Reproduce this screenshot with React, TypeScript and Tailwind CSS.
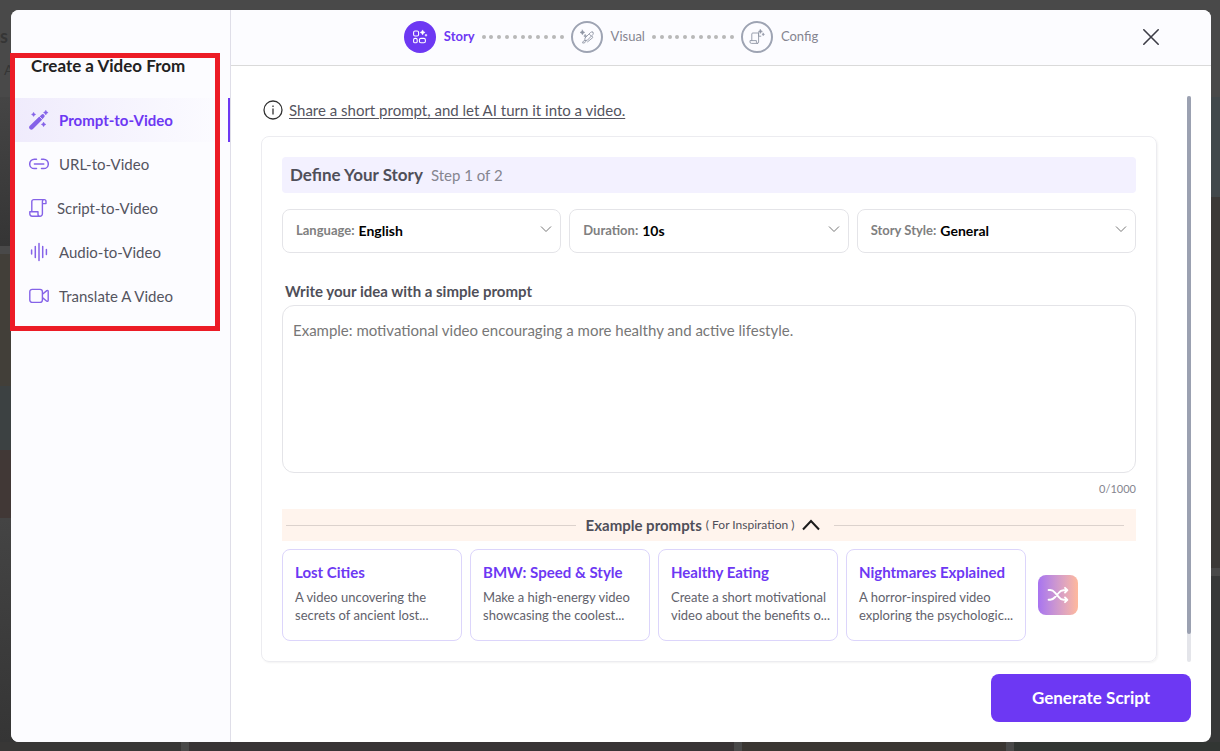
import React, { useState } from 'react';

/* ---------- Icons ---------- */

const Sparkle = ({ x, y, r }: { x: number; y: number; r: number }) => (
    <path
        d={`M${x} ${y - r}L${x + r * 0.35} ${y - r * 0.35}L${x + r} ${y}L${x + r * 0.35} ${y + r * 0.35}L${x} ${y + r}L${x - r * 0.35} ${y + r * 0.35}L${x - r} ${y}L${x - r * 0.35} ${y - r * 0.35}Z`}
        fill="currentColor"
        stroke="currentColor"
        strokeWidth="0.5"
        strokeLinejoin="round"
    />
);

const WandIcon = () => (
    <svg width="20" height="20" viewBox="0 0 20 20" fill="none" aria-hidden="true">
        <path d="M2.4 17.4L10.6 9.2" stroke="currentColor" strokeWidth="4.4" strokeLinecap="round" />
        <path d="M12.2 7.6L13.8 6" stroke="currentColor" strokeWidth="3.8" strokeLinecap="round" />
        <path d="M10.4 6.4L13.4 9.4" stroke="#f3effd" strokeWidth="0.8" />
        <Sparkle x={4.6} y={4.4} r={2.1} />
        <Sparkle x={16.8} y={2.6} r={2.3} />
        <Sparkle x={14.6} y={14.4} r={2.3} />
    </svg>
);

const LinkIcon = () => (
    <svg width="20" height="12" viewBox="0 0 20 12" fill="none" stroke="currentColor" strokeWidth="1.5" strokeLinecap="round" aria-hidden="true">
        <path d="M7.5 1.2H5.4a4.7 4.7 0 0 0 0 9.4h2.1M12.5 1.2h2.1a4.7 4.7 0 0 1 0 9.4h-2.1M5.4 5.9h9.4" />
    </svg>
);

const ScrollIcon = () => (
    <svg width="18" height="20" viewBox="0 0 18 20" fill="none" stroke="currentColor" strokeWidth="1.4" strokeLinejoin="round" strokeLinecap="round" aria-hidden="true">
        <path d="M2.8 13.6V3.6a2 2 0 0 1 2-2h10.4a1.8 1.8 0 0 1 1.8 1.8v2.2h-3.6V3.4a1.8 1.8 0 0 1 1.8-1.8M13.4 5.6v10.2a2.4 2.4 0 0 1-2.4 2.4M11 18.2a2 2 0 0 1-2-2v-2.4H0.8v2a2.4 2.4 0 0 0 2.4 2.4H11" />
    </svg>
);

const AudioIcon = () => (
    <svg width="20" height="20" viewBox="0 0 20 20" fill="none" stroke="currentColor" strokeWidth="1.5" strokeLinecap="round" aria-hidden="true">
        <path d="M2.6 8v4M6.3 4.6v10.8M10 1.6v16.8M13.7 4.6v10.8M17.4 7.6v4.8" />
    </svg>
);

const VideoIcon = () => (
    <svg width="20" height="16" viewBox="0 0 20 16" fill="none" stroke="currentColor" strokeWidth="1.4" strokeLinejoin="round" aria-hidden="true">
        <rect x="0.8" y="1.4" width="12.6" height="13" rx="2.4" />
        <path d="M13.4 6.2L17.8 2.6q1.4-.6 1.4.9v8.8q0 1.5-1.4.9L13.4 9.6" />
    </svg>
);

const StoryIcon = () => (
    <svg width="16" height="16" viewBox="0 0 16 16" fill="none" stroke="currentColor" strokeWidth="1.1" aria-hidden="true">
        <rect x="1.6" y="2" width="5" height="5" rx="1.4" />
        <rect x="1.6" y="9.4" width="3.6" height="4.4" rx="1.4" />
        <rect x="7.4" y="9.4" width="6" height="4.4" rx="1.5" />
        <Sparkle x={10.6} y={3.4} r={2.5} />
        <Sparkle x={14} y={6.2} r={1.2} />
    </svg>
);

const VisualIcon = () => (
    <svg width="16" height="16" viewBox="0 0 16 16" fill="none" stroke="currentColor" strokeWidth="0.9" strokeLinejoin="round" strokeLinecap="round" aria-hidden="true">
        <path d="M13.8 3.2c.8.6.6 1.6 0 2.4L8.4 11.2 5.8 11.6 6 9l5.4-5.4c.8-.7 1.7-1 2.4-.4ZM10.4 5.2l1.8 1.8M5.8 11.6c-1.2 0-2 .8-2.2 2.4 1.8.2 3-.2 3.4-2.4M13.2 7.4l.6 1.2L8.6 12.8" />
        <Sparkle x={3.4} y={3.4} r={2.4} />
        <Sparkle x={6.2} y={7} r={1.5} />
    </svg>
);

const ConfigIcon = () => (
    <svg width="16" height="16" viewBox="0 0 16 16" fill="none" stroke="currentColor" strokeWidth="0.9" strokeLinejoin="round" strokeLinecap="round" aria-hidden="true">
        <path d="M9.4 4H3.8a1 1 0 0 0-1 1v6.6M9.6 4v9.2a1.2 1.2 0 0 1-1.2 1.2M8.4 14.4a1 1 0 0 1-1-1v-1.8H1v1.4a1.4 1.4 0 0 0 1.4 1.4h6M9.6 4v3.2h2.2" />
        <Sparkle x={11.4} y={2.4} r={2} />
        <Sparkle x={14.2} y={5.4} r={1.3} />
    </svg>
);

const ShuffleIcon = () => (
    <svg width="22" height="18" viewBox="0 0 22 18" fill="none" stroke="currentColor" strokeWidth="1.9" strokeLinecap="round" strokeLinejoin="round" aria-hidden="true">
        <path d="M1.6 4h1.6c2.2 0 3.4 1 5 2.8l3.4 4c1.4 1.8 2.8 3 5 3h3.2M1.6 13.8h1.6c2.2 0 3.4-1 5-2.8l3.4-4c1.4-1.8 2.8-2.8 5-2.8h3.2M18 1.8L20.4 4.2 18 6.6M18 11.4l2.4 2.4-2.4 2.4" />
    </svg>
);

/* ---------- Data ---------- */

const SOURCES = [
    { label: 'Prompt-to-Video', Icon: WandIcon },
    { label: 'URL-to-Video', Icon: LinkIcon },
    { label: 'Script-to-Video', Icon: ScrollIcon },
    { label: 'Audio-to-Video', Icon: AudioIcon },
    { label: 'Translate A Video', Icon: VideoIcon },
];

const STEPS = [
    { label: 'Story', Icon: StoryIcon },
    { label: 'Visual', Icon: VisualIcon },
    { label: 'Config', Icon: ConfigIcon },
];

const OPTIONS = [
    { id: 'language', label: 'Language:', values: ['English', 'Spanish', 'French'] },
    { id: 'duration', label: 'Duration:', values: ['10s', '30s', '60s'] },
    { id: 'style', label: 'Story Style:', values: ['General', 'Dramatic', 'Funny'] },
];

const EXAMPLES = [
    { title: 'Lost Cities', lines: ['A video uncovering the', 'secrets of ancient lost...'] },
    { title: 'BMW: Speed & Style', lines: ['Make a high-energy video', 'showcasing the coolest...'] },
    { title: 'Healthy Eating', lines: ['Create a short motivational', 'video about the benefits o...'] },
    { title: 'Nightmares Explained', lines: ['A horror-inspired video', 'exploring the psychologic...'] },
];

/* ---------- Sections ---------- */

// Dimmed gallery behind the dialog, only its edges show
function Backdrop() {
    return (
        <div className="absolute inset-0 flex flex-col overflow-hidden bg-[#494949]" aria-hidden="true">
            <div className="h-[97px] shrink-0 text-[#353535]">
                <div className="pt-6 text-lg leading-6 font-bold">s</div>
                <div className="pl-1 pt-3 text-sm leading-5">A</div>
            </div>
            <div className="flex flex-1">
                <div className="flex w-1/2 flex-col gap-2">
                    <div className="h-[149px] bg-linear-to-b from-[#454545] to-[#353535]" />
                    <div className="flex flex-1 flex-col">
                        <div className="h-[132px] bg-[#423f39]" />
                        <div className="h-[64px] bg-[#3c4142]" />
                        <div className="h-[68px] bg-[#413836]" />
                        <div className="flex-1 bg-linear-to-b from-[#444444] to-[#353535]" />
                    </div>
                </div>
                <div className="flex w-1/2 flex-col gap-2">
                    <div className="flex h-[471px] flex-col">
                        <div className="h-[100px] bg-[#41484b]" />
                        <div className="flex-1 bg-[#3b3937]" />
                    </div>
                    <div className="flex-1 bg-[#373838]" />
                </div>
            </div>
            <div className="flex h-[9px] shrink-0 gap-2">
                <div className="w-[181px] bg-[#383736]" />
                <div className="flex-1 bg-[#383435]" />
                <div className="w-[264px] bg-[#3a3632]" />
                <div className="w-[206px] bg-[#323633]" />
            </div>
        </div>
    );
}

function Sidebar() {
    return (
        <aside className="w-[220px] shrink-0 border-r border-[#dfdee8] bg-[#fcfcff] pt-11">
            <h2 className="pl-5 text-[17px] leading-6 font-bold text-[#222222]">Create a Video From</h2>
            <nav className="mt-5 flex flex-col">
                {SOURCES.map(({ label, Icon }, i) => (
                    <button
                        key={label}
                        className={
                            i === 0
                                ? 'flex h-11 items-center gap-[10px] border-r-2 border-[#6d38f3] bg-linear-to-r from-[#efebfc] to-[#fcfcff] pl-[18px] text-[15px] font-bold text-[#6d38f3]'
                                : 'flex h-11 items-center gap-[10px] pl-[18px] text-[15px] text-[#55555f]'
                        }
                    >
                        <span className="text-[#8563e8]"><Icon /></span>
                        {label}
                    </button>
                ))}
            </nav>
        </aside>
    );
}

function Header() {
    return (
        <header className="flex h-14 shrink-0 items-center border-b border-[#dadada] bg-[#fcfcff] pr-10 pb-px">
            <ol className="flex flex-1 items-center justify-center gap-[7px] pr-[140px] text-[13px]">
                {STEPS.map(({ label, Icon }, i) => (
                    <React.Fragment key={label}>
                        {i > 0 && (
                            <li className="flex w-[82px] justify-between" aria-hidden="true">
                                {Array.from({ length: 11 }, (_, d) => (
                                    <span key={d} className="size-1 rounded-full bg-[#b8b8b8]" />
                                ))}
                            </li>
                        )}
                        <li className="flex items-center gap-2">
                            <span
                                className={
                                    i === 0
                                        ? 'flex size-8 items-center justify-center rounded-full bg-[#6d38f3] text-white'
                                        : 'flex size-8 items-center justify-center rounded-full border-2 border-[#9ea4b3] text-[#9096a5]'
                                }
                            >
                                <Icon />
                            </span>
                            <span className={i === 0 ? 'font-bold text-[#6d38f3]' : 'text-[#858590]'}>{label}</span>
                        </li>
                    </React.Fragment>
                ))}
            </ol>
            <button className="flex size-10 items-center justify-center text-[#3c3c46]" aria-label="Close">
                <svg width="18" height="18" viewBox="0 0 18 18" stroke="currentColor" strokeWidth="1.6" strokeLinecap="round">
                    <path d="M1.8 1.8L16.2 16.2M16.2 1.8L1.8 16.2" />
                </svg>
            </button>
        </header>
    );
}

function OptionSelect({ id, label, values }: { id: string; label: string; values: string[] }) {
    return (
        <div className="flex h-11 flex-1 items-center gap-1 rounded-lg border border-[#e4e4e8] pr-2 pb-px pl-[13px]">
            <label htmlFor={id} className="text-[13px] font-bold text-[#808080]">{label}</label>
            <select id={id} className="min-w-0 flex-1 appearance-none bg-transparent text-sm font-bold text-black">
                {values.map((v) => <option key={v}>{v}</option>)}
            </select>
            <svg className="mb-1" width="12" height="8" viewBox="0 0 12 8" fill="none" stroke="#777" aria-hidden="true">
                <path d="M1 1.5L6 6.5L11 1.5" />
            </svg>
        </div>
    );
}

function StoryCard() {
    const [prompt, setPrompt] = useState('');

    return (
        <section className="mt-3 rounded-lg border border-[#ececf0] p-5 shadow-[1px_1px_2px_rgba(0,0,0,0.05)]">
            <div className="flex h-9 items-center gap-2 rounded bg-[#f3f1ff] pl-2">
                <h3 className="text-[17px] font-bold text-[#4f4f59]">Define Your Story</h3>
                <span className="text-[15px] text-[#85858f]">Step 1 of 2</span>
            </div>

            <div className="mt-4 flex gap-2">
                {OPTIONS.map((o) => <OptionSelect key={o.id} {...o} />)}
            </div>

            <label htmlFor="idea" className="mt-7 block pl-[3px] text-[15px] leading-5 font-bold text-[#4f4f59]">
                Write your idea with a simple prompt
            </label>
            <textarea
                id="idea"
                value={prompt}
                maxLength={1000}
                onChange={(e) => setPrompt(e.target.value)}
                placeholder="Example: motivational video encouraging a more healthy and active lifestyle."
                className="mt-1 block h-[168px] w-full resize-none rounded-xl border border-[#e4e4e8] px-[10px] py-[14px] text-[15px] leading-5 text-[#33333d] placeholder:text-[#777777]"
            />
            <p className="mt-2 text-right text-[11px] leading-4 text-[#85858f]">{prompt.length}/1000</p>

            <div className="mt-3 flex h-8 items-center bg-[#fff4ed] pr-3 pl-1">
                <span className="h-px flex-1 bg-[#dcd2cd]" />
                <button className="mx-[10px] flex items-center gap-1 text-[#4f4f59]">
                    <span className="text-[15px] font-bold">Example prompts</span>
                    <span className="text-xs">( For Inspiration )</span>
                    <svg className="mx-1" width="18" height="12" viewBox="0 0 18 12" fill="none" stroke="#1c1c1c" strokeWidth="2" aria-hidden="true">
                        <path d="M1 10.5L9 2L17 10.5" />
                    </svg>
                </button>
                <span className="h-px flex-1 bg-[#dcd2cd]" />
            </div>

            <div className="mt-2 flex items-center gap-2">
                {EXAMPLES.map(({ title, lines }) => (
                    <button key={title} className="h-[92px] w-[180px] rounded-lg border border-[#dcd5fb] px-3 pb-1 text-left">
                        <span className="block text-[15px] leading-5 font-bold text-[#6d38f3]">{title}</span>
                        <span className="mt-[6px] block text-[13px] leading-[18px] whitespace-nowrap text-[#62626c]">
                            {lines[0]}<br />{lines[1]}
                        </span>
                    </button>
                ))}
                <button
                    className="ml-1 flex size-10 items-center justify-center rounded-lg bg-linear-to-r from-[#a873f0] to-[#ffb99c] text-white"
                    aria-label="Shuffle examples"
                >
                    <ShuffleIcon />
                </button>
            </div>
        </section>
    );
}

export default function App() {
    return (
        <div className="relative flex min-h-screen pt-[10px] pr-[9px] pb-[9px] pl-[11px] font-['Lato','Open_Sans',sans-serif]">
            <Backdrop />

            <div className="relative flex flex-1 overflow-hidden rounded-lg bg-white" role="dialog" aria-label="Create a video">
                <Sidebar />
                <div className="flex min-w-0 flex-1 flex-col">
                    <Header />
                    <div className="flex flex-1 flex-col pt-[30px] pr-5 pb-5 pl-[30px]">
                        <div className="flex gap-[30px]">
                            <div className="min-w-0 flex-1">
                                <div className="flex h-7 items-center gap-[6px] pl-[2px]">
                                    <svg width="20" height="20" viewBox="0 0 20 20" fill="none" stroke="#333" strokeWidth="1.3" aria-hidden="true">
                                        <circle cx="10" cy="10" r="9" />
                                        <path d="M10 8.5v6M10 5.4v1.5" />
                                    </svg>
                                    <a href="#help" className="text-[15px] text-[#55555f] underline underline-offset-2">
                                        Share a short prompt, and let AI turn it into a video.
                                    </a>
                                </div>
                                <StoryCard />
                            </div>
                            {/* Scroll track */}
                            <div className="flex w-1 flex-col rounded-full bg-[#e4e5ea]">
                                <div className="h-[95%] rounded-full bg-[#9ba1b1]" />
                            </div>
                        </div>
                        <button className="mt-3 ml-auto h-12 w-[200px] rounded-lg bg-[#6d38f3] text-[17px] font-bold text-white">
                            Generate Script
                        </button>
                    </div>
                </div>
            </div>

            {/* Highlight around the video source menu */}
            <div className="pointer-events-none absolute top-[53px] left-[10px] h-[278px] w-[210px] border-5 border-[#ec1c26]" />
        </div>
    );
}
